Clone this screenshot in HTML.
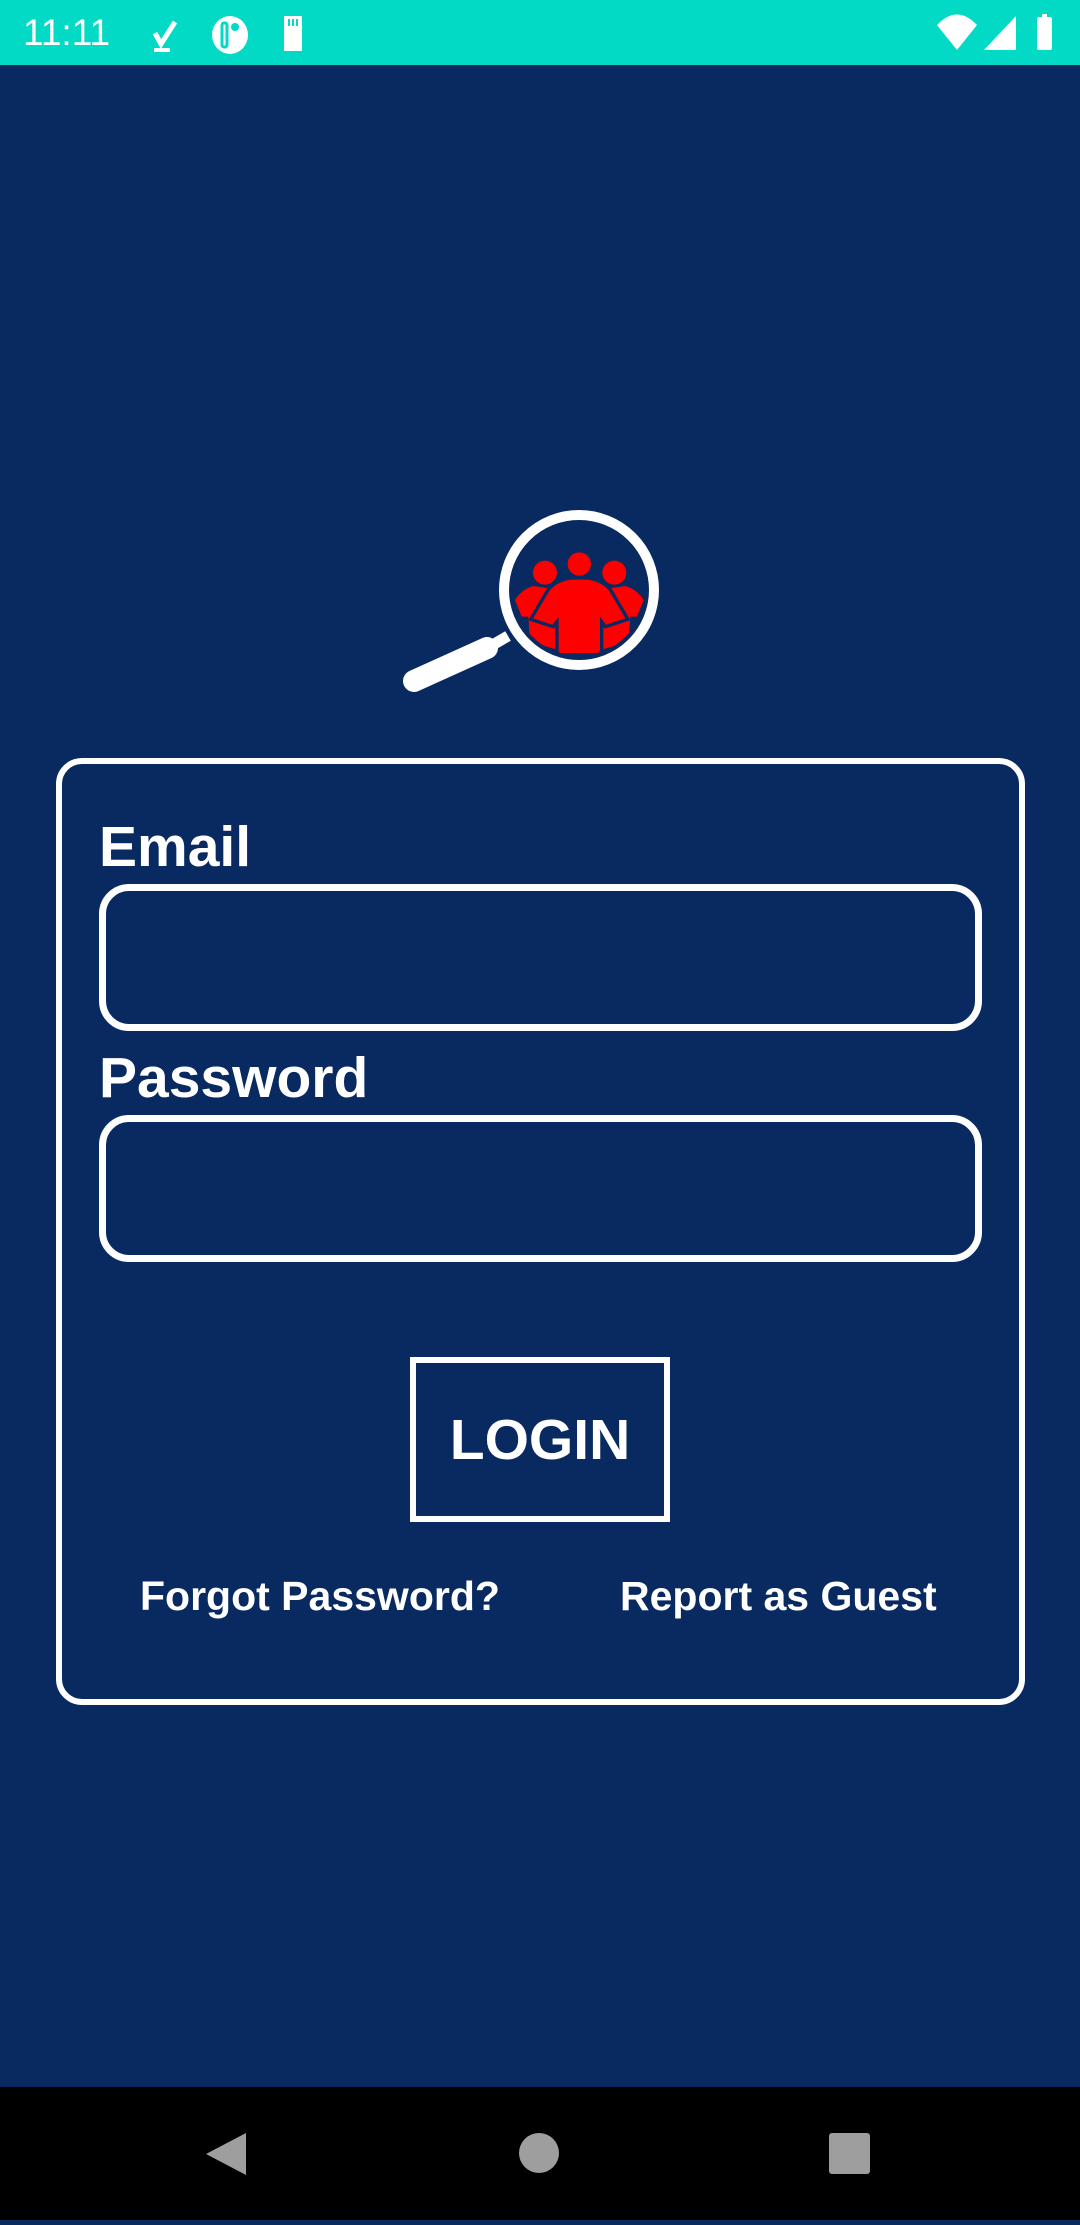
<!DOCTYPE html>
<html><head><meta charset="utf-8"><style>
*{margin:0;padding:0;box-sizing:border-box}
body{width:1080px;height:2220px;background:#082a61;position:relative;overflow:hidden;font-family:"Liberation Sans",sans-serif;color:#fff}
.sb{position:absolute;left:0;top:0;width:1080px;height:65px;background:#03dac6}
.nav{position:absolute;left:0;top:2087px;width:1080px;height:133px;background:#000}
.card{position:absolute;left:56px;top:758px;width:969px;height:947px;border:6px solid #fff;border-radius:26px}
.lbl{position:absolute;left:99px;font-weight:bold;font-size:57px;line-height:1}
.inp{position:absolute;left:99px;width:883px;height:147px;border:7px solid #fff;border-radius:30px}
.btn{position:absolute;left:410px;top:1357px;width:260px;height:165px;border:6px solid #fff;display:flex;align-items:center;justify-content:center;font-weight:bold;font-size:57px}
.lnk{position:absolute;top:1572px;font-weight:bold;font-size:41px;line-height:48px}
</style></head><body>
<div class="sb">
<div style="position:absolute;left:23px;top:13px;font-size:37px;line-height:40px;color:#fff">11:11</div>
<svg style="position:absolute;left:150px;top:12px" width="160" height="44" viewBox="0 0 160 44">
<path d="M5 21l6 11 14-22" stroke="#fff" stroke-width="5" fill="none"/><rect x="4" y="36" width="16" height="4" fill="#fff"/>
<ellipse cx="80" cy="23" rx="18" ry="19" fill="#fff"/><rect x="72" y="11" width="5" height="24" rx="2" fill="#fff" stroke="#03dac6" stroke-width="3"/><circle cx="85" cy="15" r="4" fill="#03dac6"/>
<path d="M134 4h18v35h-18v-27z" fill="#fff"/><rect x="138" y="7" width="2" height="7" fill="#03dac6"/><rect x="142" y="7" width="2" height="7" fill="#03dac6"/><rect x="146" y="7" width="2" height="7" fill="#03dac6"/></svg>
<svg style="position:absolute;left:930px;top:12px" width="130" height="44" viewBox="0 0 130 44">
<path d="M7 13Q27-8 47 13L27 38z" fill="#fff"/><path d="M86 4v34H54z" fill="#fff"/><rect x="112" y="2" width="5" height="4" fill="#fff"/><rect x="107" y="5" width="15" height="33" rx="2" fill="#fff"/></svg>
</div>
<svg style="position:absolute;left:390px;top:490px" width="290" height="220" viewBox="0 0 290 220">
<clipPath id="c"><circle cx="189" cy="100" r="66"/></clipPath>
<g clip-path="url(#c)"><g transform="scale(0.3333)" fill="#f00" stroke="#082a61" stroke-width="10">
<circle cx="465" cy="248" r="36" stroke="none"/><circle cx="673" cy="248" r="36" stroke="none"/>
<path d="M430 288 L478 295 L430 385 L505 408 V480 L420 455 L415 380 L395 380 L375 330 Q395 298 430 288Z" stroke="none"/>
<path d="M706 288 L658 295 L706 385 L631 408 V480 L716 455 L721 380 L741 380 L761 330 Q741 298 706 288Z" stroke="none"/>
<path d="M540 264 H596 Q640 272 662 300 L714 388 L646 410 L635 395 V480 Q635 494 620 494 H516 Q501 494 501 480 V395 L490 410 L422 388 L474 300 Q496 272 540 264Z"/>
<circle cx="568" cy="222" r="40"/>
</g></g>
<circle cx="189" cy="100" r="75" fill="none" stroke="#fff" stroke-width="10"/>
<line x1="24" y1="191" x2="97" y2="158" stroke="#fff" stroke-width="22" stroke-linecap="round"/>
<line x1="94" y1="160" x2="118" y2="146" stroke="#fff" stroke-width="11"/>
</svg>
<div class="card"></div>
<div class="lbl" style="top:819px">Email</div>
<div class="inp" style="top:884px"></div>
<div class="lbl" style="top:1050px">Password</div>
<div class="inp" style="top:1115px"></div>
<div class="btn">LOGIN</div>
<div class="lnk" style="left:140px">Forgot Password?</div>
<div class="lnk" style="left:620px">Report as Guest</div>
<div class="nav">
<svg width="1080" height="133"><path d="M246 46v42l-40-21z" fill="#9e9e9e"/><circle cx="539" cy="66" r="20" fill="#9e9e9e"/><rect x="829" y="46" width="41" height="41" rx="3" fill="#9e9e9e"/></svg>
</div>
</body></html>
